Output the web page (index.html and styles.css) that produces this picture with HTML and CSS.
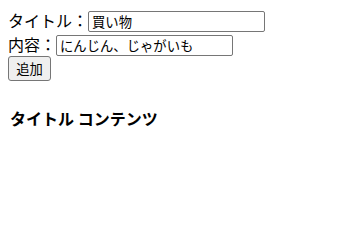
FILE: index.html
```html
<!DOCTYPE html>
<html lang="ja">
<head>
<meta charset="utf-8">
<link rel="stylesheet" href="styles.css">
</head>
<body>
<div class="row"><label class="label">タイトル：</label><input class="field field-title" type="text" value="買い物"></div>
<div class="row"><label class="label">内容：</label><input class="field field-content" type="text" value="にんじん、じゃがいも"></div>
<button class="add-btn" type="button">追加</button>
<div class="item"><span class="item-title">タイトル</span> <span class="item-content">コンテンツ</span></div>
</body>
</html>
```
FILE: styles.css
```css
body {
  margin: 8px;
  font-family: "Noto Sans CJK JP", "Noto Sans", sans-serif;
  font-size: 16px;
  color: #000;
  background: #fff;
}
.row {
  display: flex;
  align-items: flex-start;
  height: 24px;
}
.label {
  line-height: 24px;
  white-space: nowrap;
}
.field {
  box-sizing: border-box;
  height: 21px;
  margin: 3px 0 0 0;
  padding: 0 3px;
  border: 1px solid #767676;
  border-radius: 2px;
  font-family: "Noto Sans CJK JP", sans-serif;
  font-size: 13.33px;
  color: #000;
  background: #fff;
}
.field-title { width: 177px; }
.field-content { width: 177px; }
.add-btn {
  display: block;
  box-sizing: border-box;
  width: 43px;
  height: 25px;
  margin: 0;
  padding: 0;
  border: 1px solid #767676;
  border-radius: 3px;
  background: #efefef;
  font-family: "Noto Sans CJK JP", sans-serif;
  font-size: 13.33px;
  color: #000;
}
.item {
  margin-top: 25px;
  padding-left: 2px;
  line-height: 24px;
  font-weight: bold;
}
```
